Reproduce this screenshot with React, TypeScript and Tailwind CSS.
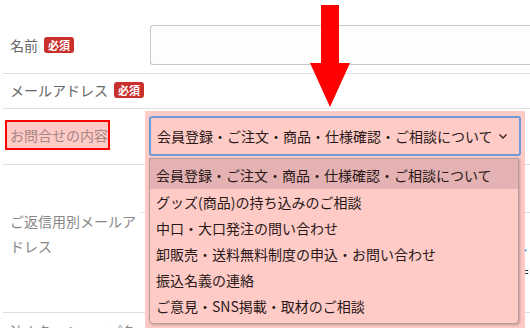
import React from "react";

const options = [
  "会員登録・ご注文・商品・仕様確認・ご相談について",
  "グッズ(商品)の持ち込みのご相談",
  "中口・大口発注の問い合わせ",
  "卸販売・送料無料制度の申込・お問い合わせ",
  "振込名義の連絡",
  "ご意見・SNS掲載・取材のご相談",
];

function Badge() {
  return (
    <span className="ml-[6px] inline-flex h-[16px] w-[30px] items-center justify-center rounded-[3px] bg-[#c9302c] text-[11px] font-bold leading-none text-white">
      必須
    </span>
  );
}

export default function App() {
  return (
    <div
      className="relative h-[328px] w-[530px] overflow-hidden bg-white text-[14px]"
      style={{ fontFamily: '"Noto Sans CJK JP", "Noto Sans", sans-serif' }}
    >
      {/* form rows */}
      <div className="ml-[3px] flex flex-col">
        {/* row 1 */}
        <div className="flex h-[73px] items-end pb-[8px]">
          <div className="flex h-[40px] w-[146px] items-center pl-[7px] text-[#666]">
            <span className="leading-[20px]">名前</span>
            <Badge />
          </div>
          <div className="ml-[1px] h-[40px] flex-1 rounded-l-[3px] border border-r-0 border-[#c8c8c8] bg-[#fdfdfd]" />
        </div>
        <div className="h-px bg-[#e0e0e0]" />
        {/* row 2 */}
        <div className="flex h-[34px] items-center pb-[2px] pl-[7px] text-[#666]">
          <span className="leading-[20px]">メールアドレス</span>
          <Badge />
        </div>
        <div className="h-px bg-[#e0e0e0]" />
        {/* row 3 */}
        <div className="flex h-[55px] items-start">
          <div className="w-[146px] pl-[2px] pt-[11px]">
            <div className="flex h-[30px] w-[105px] items-center border-2 border-[#ff0000] bg-[#ffcbc6] pl-[3px] text-[#a38686]">
              <span className="leading-[20px]">お問合せの内容</span>
            </div>
          </div>
        </div>
        <div className="h-px bg-[#e0e0e0]" />
        {/* row 4 */}
        <div className="flex h-[147px]">
          <div className="w-[146px] pl-[7px] pt-[44px] text-[#888]">
            <div className="w-[130px] leading-[25px]">ご返信用別メールアドレス</div>
          </div>
          <div className="flex-1 pt-[47px]">
            <div className="h-px bg-[#e0e0e0]" />
            <div className="mt-[21px] whitespace-nowrap pl-[360px] leading-[25px] text-[#333]">
              ご<span className="text-[#3377cc]">し</span>
            </div>
            <div className="whitespace-nowrap pl-[362px] leading-[25px] text-[#333]">て＝</div>
          </div>
        </div>
        <div className="h-px bg-[#e0e0e0]" />
        {/* row 5 */}
        <div className="pl-[7px] pt-[8px] leading-[20px] text-[#888]">法人名・ショップ名</div>
      </div>

      {/* pink highlight panel with select */}
      <div className="absolute left-[145px] top-[111px] h-[230px] w-[380px] bg-[#ffcbc6] px-[4px] pt-[5px]">
        <div className="flex h-[40px] w-[372px] items-center justify-between rounded-[3px] border-2 border-[#6a9ad8] pl-[6px] pr-[10px] text-[#2a1818]">
          <span className="leading-[20px]">{options[0]}</span>
          <svg width="10" height="7" viewBox="0 0 10 7" className="mr-[1px]">
            <polyline points="1.5,1.5 5,5 8.5,1.5" fill="none" stroke="#3a2020" strokeWidth="1.4" />
          </svg>
        </div>
        {/* dropdown list */}
        <div className="mt-[2px] w-[370px] rounded-b-[4px] border border-[#b89c9c] bg-[#ffcbc6] pb-[4px] shadow-[1px_1px_3px_rgba(0,0,0,0.25)]">
          {options.map((o, i) => (
            <div
              key={o}
              className={
                i === 0
                  ? "flex h-[30px] items-center bg-[#e4b2b2] pl-[6px] pt-[2px] text-[#2a1818]"
                  : "flex h-[26px] items-center pl-[6px] text-[#2a1818]"
              }
            >
              <span className="leading-[20px]">{o}</span>
            </div>
          ))}
        </div>
      </div>

      {/* red arrow */}
      <svg className="absolute left-[309px] top-[5px]" width="42" height="103" viewBox="0 0 42 103">
        <polygon points="12,0 30,0 30,58 41,58 21,102 1,58 12,58" fill="#ff0000" />
      </svg>
    </div>
  );
}
